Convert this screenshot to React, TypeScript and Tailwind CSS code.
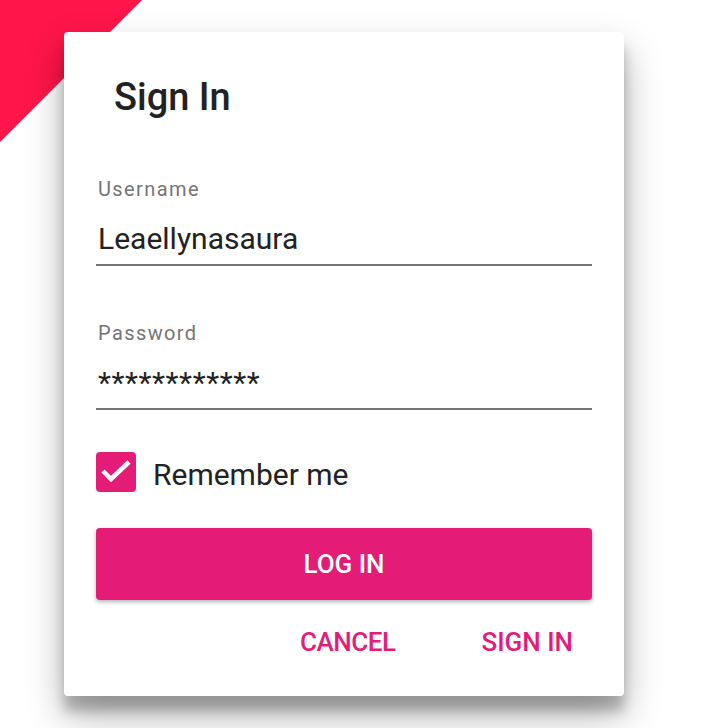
import React, { useState } from 'react';

const font = { fontFamily: 'Roboto, "Noto Sans", sans-serif' };

interface FieldProps {
  label: string;
  value: string;
  stars?: boolean;
}

const Field: React.FC<FieldProps> = ({ label, value, stars }) => (
  <div className="flex flex-col">
    <label className="pl-[2px] text-[20px] leading-[24px] tracking-[1.4px] text-[#757575]">{label}</label>
    <div
      className={`mt-[20px] pb-[7px] pl-[2px] border-b-2 border-[#767676] text-[30px] leading-[36px] text-[#222] ${
        stars ? 'tracking-[0.6px]' : ''
      }`}
    >
      {value}
    </div>
  </div>
);

const App: React.FC = () => {
  const [remember, setRemember] = useState<boolean>(true);

  return (
    <div className="relative w-[720px] h-[728px] overflow-hidden bg-white pl-[64px] pt-[32px]" style={font}>
      {/* red corner */}
      <svg className="absolute left-0 top-0" width="142" height="142" viewBox="0 0 142 142">
        <polygon points="0,0 142,0 0,142" fill="#ff1549" />
      </svg>

      {/* card */}
      <div className="relative w-[560px] rounded-[4px] bg-white px-[32px] pt-[43px] pb-[39px] shadow-[0_19px_38px_rgba(0,0,0,0.30),0_15px_12px_rgba(0,0,0,0.22)]">
        <h1 className="ml-[18px] text-[38px] leading-[44px] font-medium text-[#222]">Sign In</h1>

        <div className="mt-[58px]">
          <Field label="Username" value="Leaellynasaura" />
        </div>
        <div className="mt-[55px]">
          <Field label="Password" value="************" stars />
        </div>

        {/* remember me */}
        <div className="mt-[42px] flex h-[40px] items-start gap-[17px]">
          <button
            onClick={() => setRemember(!remember)}
            className={`flex h-[40px] w-[40px] items-center justify-center rounded-[4px] ${
              remember ? 'bg-[#e41c78]' : 'border-2 border-[#757575] bg-white'
            }`}
          >
            {remember && (
              <svg width="40" height="40" viewBox="0 0 40 40">
                <path d="M7 19 L15 27 L33 10" fill="none" stroke="white" strokeWidth="4.5" />
              </svg>
            )}
          </button>
          <span className="mt-[3px] text-[30px] leading-[40px] text-[#222]">Remember me</span>
        </div>

        {/* log in */}
        <button className="mt-[36px] flex h-[72px] w-full items-center justify-center rounded-[4px] bg-[#e41c78] text-[26px] font-medium text-white shadow-[0_2px_4px_rgba(0,0,0,0.3)]">
          LOG IN
        </button>

        {/* actions */}
        <div className="mt-[27px] flex justify-end gap-[86px] pr-[19px] text-[26px] leading-[30px] font-medium text-[#e41c78]">
          <button className="tracking-[-0.5px]">CANCEL</button>
          <button>SIGN IN</button>
        </div>
      </div>
    </div>
  );
};

export default App;
